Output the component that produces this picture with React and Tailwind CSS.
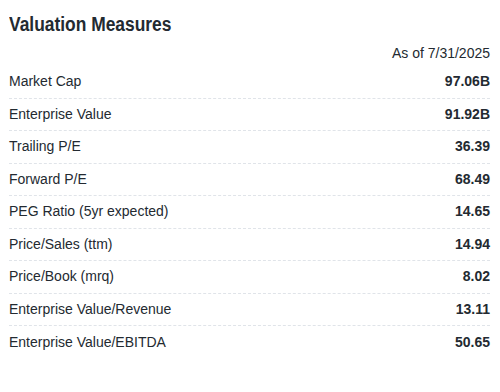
import React from "react";

const rows = [
  ["Market Cap", "97.06B"],
  ["Enterprise Value", "91.92B"],
  ["Trailing P/E", "36.39"],
  ["Forward P/E", "68.49"],
  ["PEG Ratio (5yr expected)", "14.65"],
  ["Price/Sales (ttm)", "14.94"],
  ["Price/Book (mrq)", "8.02"],
  ["Enterprise Value/Revenue", "13.11"],
  ["Enterprise Value/EBITDA", "50.65"],
];

const App = () => {
  return (
    <div
      className="w-[500px] h-[392px] bg-white pl-[9px] pr-[10px] text-[#232a31]"
      style={{ fontFamily: '"Liberation Sans", Arial, sans-serif' }}
    >
      <h2 className="pt-[12px] text-[20px] leading-[24px] font-bold">
        <span className="inline-block origin-left scale-x-[0.87]">Valuation Measures</span>
      </h2>
      <div className="mt-[4px] h-[26px] flex items-center justify-end text-[14px]">
        As of 7/31/2025
      </div>
      <div>
        {rows.map(([label, value], i) => (
          <div
            key={label}
            className={
              "flex items-center justify-between h-[32.5px] text-[14px] " +
              (i < rows.length - 1 ? "border-b border-dashed border-[#e0e4e9]" : "")
            }
          >
            <span>{label}</span>
            <span className="font-bold">{value}</span>
          </div>
        ))}
      </div>
    </div>
  );
};

export default App;
